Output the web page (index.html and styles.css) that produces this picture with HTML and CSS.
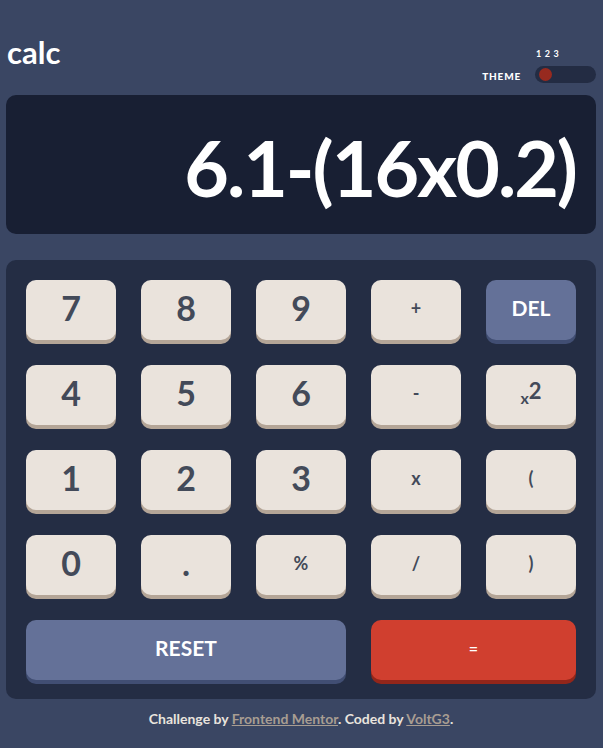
FILE: index.html
```html
<!DOCTYPE html>
<html>
<head>
<meta charset="utf-8">
<link rel="stylesheet" href="styles.css">
</head>
<body>
<div class="app">
  <header class="header">
    <h1 class="logo">calc</h1>
    <div class="theme">
      <span class="theme-label">THEME</span>
      <div class="theme-control">
        <div class="theme-nums"><span>1</span><span>2</span><span>3</span></div>
        <div class="toggle"><span class="knob"></span></div>
      </div>
    </div>
  </header>
  <section class="display">6.1-(16x0.2)</section>
  <section class="keypad">
    <button class="key num">7</button>
    <button class="key num">8</button>
    <button class="key num">9</button>
    <button class="key op">+</button>
    <button class="key blue">DEL</button>
    <button class="key num">4</button>
    <button class="key num">5</button>
    <button class="key num">6</button>
    <button class="key op">-</button>
    <button class="key op sq"><span class="x">x</span><span class="two">2</span></button>
    <button class="key num">1</button>
    <button class="key num">2</button>
    <button class="key num">3</button>
    <button class="key op">x</button>
    <button class="key op">(</button>
    <button class="key num">0</button>
    <button class="key num">.</button>
    <button class="key op">%</button>
    <button class="key op">/</button>
    <button class="key op">)</button>
    <button class="key blue reset">RESET</button>
    <button class="key red equals">=</button>
  </section>
  <footer class="footer">Challenge by <a href="#">Frontend Mentor</a>. Coded by <a href="#">VoltG3</a>.</footer>
</div>
</body>
</html>
```
FILE: styles.css
```css
* { box-sizing: border-box; }
html, body { margin: 0; padding: 0; }
body {
  background: #3a4663;
  font-family: "Lato", "DejaVu Sans", sans-serif;
  color: #ffffff;
  width: 603px;
  height: 748px;
  overflow: hidden;
}
.app {
  width: 590px;
  margin-left: 6px;
  padding-top: 38px;
}
.header {
  display: flex;
  justify-content: space-between;
  align-items: flex-start;
  height: 57px;
}
.logo {
  margin: 0;
  font-size: 31px;
  font-weight: 700;
  line-height: 28px;
  padding-left: 1px;
}
.theme {
  display: flex;
  align-items: flex-end;
  gap: 14px;
  padding-top: 11px;
}
.theme-label {
  font-size: 10px;
  font-weight: 900;
  letter-spacing: 0.8px;
  line-height: 10px;
  margin-bottom: 2px;
}
.theme-control {
  display: flex;
  flex-direction: column;
  gap: 7px;
}
.theme-nums {
  display: flex;
  gap: 3px;
  font-size: 9px;
  font-weight: 700;
  letter-spacing: 0.5px;
  line-height: 10px;
  padding-left: 1px;
}
.toggle {
  width: 61px;
  height: 17px;
  border-radius: 9px;
  background: #232c43;
  padding: 2px 4px;
}
.knob {
  display: block;
  width: 13px;
  height: 13px;
  border-radius: 50%;
  background: #972a1f;
}
.display {
  height: 139px;
  background: #181f33;
  border-radius: 10px;
  display: flex;
  align-items: center;
  justify-content: flex-end;
  padding: 4px 20px 0 0;
  font-size: 77px;
  font-weight: 700;
  letter-spacing: -2px;
}
.keypad {
  margin-top: 26px;
  background: #242d44;
  border-radius: 10px;
  padding: 20px 20px 19px;
  display: grid;
  grid-template-columns: repeat(5, 90px);
  grid-auto-rows: 60px;
  column-gap: 25px;
  row-gap: 25px;
}
.key {
  border: none;
  border-radius: 10px;
  font-family: inherit;
  font-weight: 700;
  background: #eae3dc;
  color: #434a59;
  box-shadow: 0 4px 0 #b4a597;
  padding: 0 0 6px;
  display: flex;
  align-items: center;
  justify-content: center;
}
.num { font-size: 34px; }
.op { font-size: 18px; padding-bottom: 4px; }
.blue {
  background: #647198;
  box-shadow: 0 4px 0 #414e73;
  color: #ffffff;
  font-size: 21px;
}
.red {
  background: #d03f2f;
  box-shadow: 0 4px 0 #93261a;
  color: #ffffff;
  font-size: 16px;
}
.reset { grid-column: span 3; }
.equals { grid-column: span 2; }
.sq .x { font-size: 16px; margin-top: 8px; }
.sq .two { font-size: 22px; margin-top: -6px; }
.footer {
  text-align: center;
  font-size: 14px;
  font-weight: 700;
  color: #e9e4de;
  margin-top: 11px;
}
.footer a { color: #a89d92; }
```
